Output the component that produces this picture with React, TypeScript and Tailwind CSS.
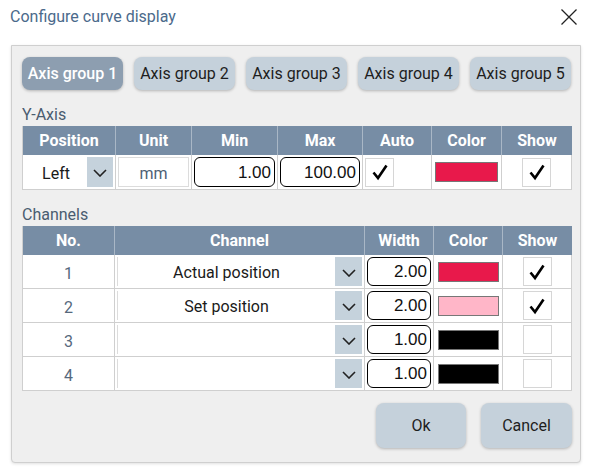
import React from 'react';

const Chevron = () => (
  <svg width="14" height="8" viewBox="0 0 14 8" fill="none">
    <path d="M1 1l6 6 6-6" stroke="#222" strokeWidth="1.6" />
  </svg>
);

const Check = ({ on }: { on: boolean }) => (
  <div className="w-[29px] h-[29px] bg-white border border-[#d6d6d6] flex items-center justify-center">
    {on && (
      <svg width="18" height="18" viewBox="0 0 18 18" fill="none">
        <path d="M2.5 9.5l4.5 5.5L15.5 2.5" stroke="#000" strokeWidth="2.6" />
      </svg>
    )}
  </div>
);

const NumInput = ({ value }: { value: string }) => (
  <div className="w-full h-full bg-white border border-black rounded-[6px] flex items-center justify-end pr-[3px] pt-[1px] font-['Liberation_Sans',sans-serif] text-[17px] text-[#111]">
    {value}
  </div>
);

const Select = ({ label, drop }: { label: string; drop: number }) => (
  <div className="flex h-full w-full">
    <div className="flex-1 bg-white flex items-center justify-center pt-[3px] text-[16px] text-[#1a1a1a]">{label}</div>
    <div className="flex items-center justify-center bg-[#c5d2dc] pt-[2px]" style={{ width: drop }}>
      <Chevron />
    </div>
  </div>
);

const Swatch = ({ color }: { color: string }) => (
  <div className="h-[20px] w-[61px] border border-[#777]" style={{ backgroundColor: color }} />
);

const groups = ['Axis group 1', 'Axis group 2', 'Axis group 3', 'Axis group 4', 'Axis group 5'];

const channels = [
  { no: 1, name: 'Actual position', width: '2.00', color: '#e8194b', show: true },
  { no: 2, name: 'Set position', width: '2.00', color: '#ffb6c8', show: true },
  { no: 3, name: '', width: '1.00', color: '#000000', show: false },
  { no: 4, name: '', width: '1.00', color: '#000000', show: false },
];

const headCell = 'h-[29px] flex items-center justify-center pt-[1px] bg-[#778da5] text-white font-bold text-[16px] border-r border-[#a9b7c6] last:border-r-0';
const cell = 'border-r border-b border-[#cfcfcf] bg-white';

export default function App() {
  return (
    <div className="w-[590px] h-[471px] bg-white font-['Roboto',sans-serif] overflow-hidden">
      <div className="h-[45px] flex items-start justify-between pl-[10px] pr-[13px] pt-[7px]">
        <span className="text-[16px] leading-[20px] text-[#4b6a8b]">Configure curve display</span>
        <svg className="mt-[2px]" width="16" height="16" viewBox="0 0 16 16" fill="none">
          <path d="M0.5 0.5l15 15M15.5 0.5l-15 15" stroke="#222" strokeWidth="1.3" />
        </svg>
      </div>

      <div className="ml-[11px] w-[570px] h-[418px] bg-[#efefef] border border-[#cfcfcf] rounded-b-[4px] shadow-[0_1px_3px_rgba(0,0,0,0.12)] pl-[10px] pr-[9px] pt-[11px]">
        <div className="flex gap-[11px]">
          {groups.map((g, i) => (
            <div
              key={g}
              className={`w-[101px] h-[33px] rounded-[8px] flex items-center justify-center pt-[1px] text-[16px] shadow-[0_1px_3px_rgba(0,0,0,0.25)] ${
                i === 0 ? 'bg-[#8d9eb0] text-white font-medium' : 'bg-[#c5d1db] text-[#1e1e1e]'
              }`}
            >
              {g}
            </div>
          ))}
        </div>

        <div className="pt-[16px] pb-[2px] leading-[18px] text-[16px] text-[#4a5c70]">Y-Axis</div>
        <div className="w-[549px] border-l border-[#cfcfcf]">
          <div className="grid grid-cols-[93px_76px_86px_85px_69px_70px_70px]">
            {['Position', 'Unit', 'Min', 'Max', 'Auto', 'Color', 'Show'].map((h) => (
              <div key={h} className={headCell}>{h}</div>
            ))}
          </div>
          <div className="grid grid-cols-[93px_76px_86px_85px_69px_70px_70px] h-[35px]">
            <div className={`${cell} p-[2px]`}>
              <Select label="Left" drop={26} />
            </div>
            <div className={`${cell} p-[2px]`}>
              <div className="h-full border border-[#dcdcdc] flex items-center justify-center pt-[3px] text-[16px] text-[#4e6075]">mm</div>
            </div>
            <div className={`${cell} p-[2px]`}>
              <NumInput value="1.00" />
            </div>
            <div className={`${cell} p-[2px]`}>
              <NumInput value="100.00" />
            </div>
            <div className={`${cell} flex items-center pl-[2px]`}>
              <Check on />
            </div>
            <div className={`${cell} flex items-center justify-center`}>
              <div className="h-[20px] w-[63px] border border-[#777] bg-[#e8194b]" />
            </div>
            <div className={`${cell} flex items-center justify-center`}>
              <Check on />
            </div>
          </div>
        </div>

        <div className="pt-[16px] pb-[2px] leading-[18px] text-[16px] text-[#4a5c70]">Channels</div>
        <div className="w-[549px] border-l border-[#cfcfcf]">
          <div className="grid grid-cols-[92px_250px_69px_69px_69px]">
            {['No.', 'Channel', 'Width', 'Color', 'Show'].map((h) => (
              <div key={h} className={headCell}>{h}</div>
            ))}
          </div>
          {channels.map((c) => (
            <div key={c.no} className="grid grid-cols-[92px_250px_69px_69px_69px] h-[34px]">
              <div className={`${cell} flex items-center justify-center pt-[4px] text-[16px] text-[#56687c]`}>{c.no}</div>
              <div className={`${cell} p-[2px]`}>
                <div className="h-full border-l border-[#dcdcdc]">
                  <Select label={c.name} drop={27} />
                </div>
              </div>
              <div className={`${cell} p-[2px]`}>
                <NumInput value={c.width} />
              </div>
              <div className={`${cell} flex items-center justify-center`}>
                <Swatch color={c.color} />
              </div>
              <div className={`${cell} flex items-center justify-center`}>
                <Check on={c.show} />
              </div>
            </div>
          ))}
        </div>

        <div className="flex justify-end gap-[15px] mt-[12px] mr-[-1px]">
          <button className="w-[90px] h-[45px] rounded-[8px] bg-[#c5d1db] pt-[1px] text-[16px] text-[#1e1e1e] shadow-[0_1px_3px_rgba(0,0,0,0.25)]">
            Ok
          </button>
          <button className="w-[91px] h-[45px] rounded-[8px] bg-[#c5d1db] pt-[1px] text-[16px] text-[#1e1e1e] shadow-[0_1px_3px_rgba(0,0,0,0.25)]">
            Cancel
          </button>
        </div>
      </div>
    </div>
  );
}
